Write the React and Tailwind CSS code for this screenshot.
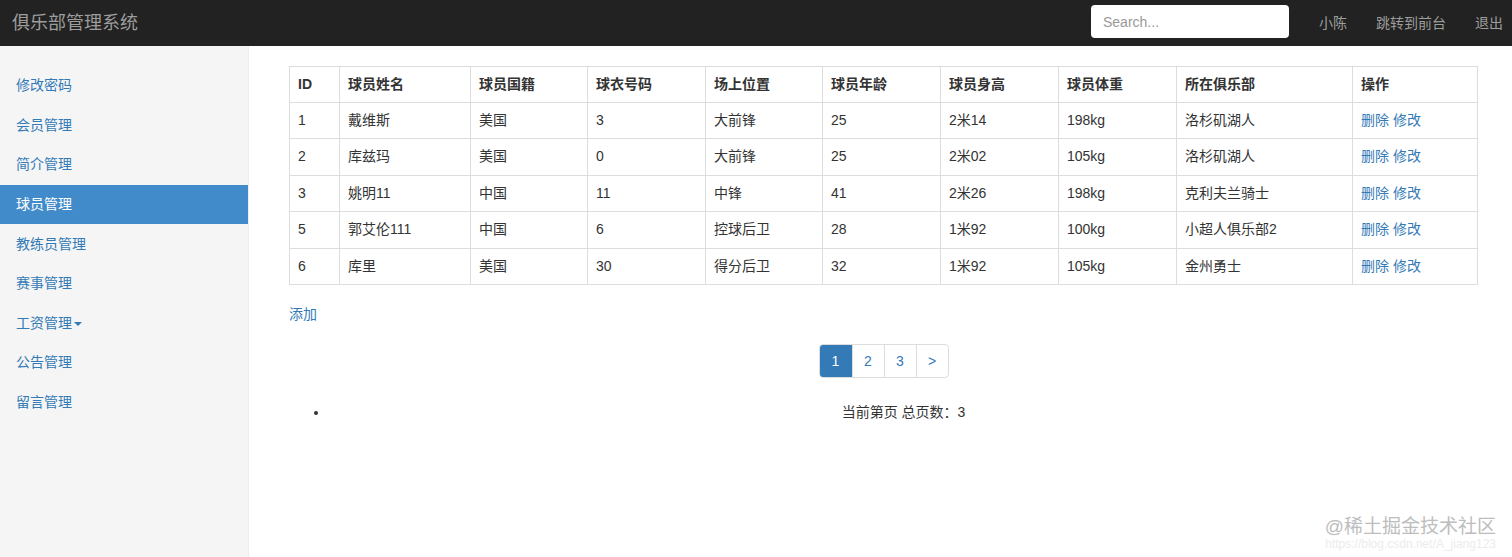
const font = {
  fontFamily: '"Liberation Sans", Arial, "Noto Sans CJK SC", sans-serif',
};

const menu = [
  "修改密码",
  "会员管理",
  "简介管理",
  "球员管理",
  "教练员管理",
  "赛事管理",
  "工资管理",
  "公告管理",
  "留言管理",
];

const headers = ["ID", "球员姓名", "球员国籍", "球衣号码", "场上位置", "球员年龄", "球员身高", "球员体重", "所在俱乐部", "操作"];
const widths = [50, 131, 117, 118, 117, 118, 118, 118, 176, 125];

const players = [
  ["1", "戴维斯", "美国", "3", "大前锋", "25", "2米14", "198kg", "洛杉矶湖人"],
  ["2", "库兹玛", "美国", "0", "大前锋", "25", "2米02", "105kg", "洛杉矶湖人"],
  ["3", "姚明11", "中国", "11", "中锋", "41", "2米26", "198kg", "克利夫兰骑士"],
  ["5", "郭艾伦111", "中国", "6", "控球后卫", "28", "1米92", "100kg", "小超人俱乐部2"],
  ["6", "库里", "美国", "30", "得分后卫", "32", "1米92", "105kg", "金州勇士"],
];

export default function App() {
  return (
    <div className="relative min-h-[557px] bg-white text-[14px] text-[#333]" style={font}>
      {/* top navbar */}
      <div className="flex h-[46px] items-center bg-[#222] pl-3">
        <div className="text-[18px] text-[#9d9d9d]">俱乐部管理系统</div>
        <div className="ml-auto flex items-center">
          <input
            className="mb-[3px] h-[33px] w-[198px] rounded-[4px] bg-white px-3 text-[14px] outline-none placeholder:text-[#999]"
            placeholder="Search..."
          />
          <div className="ml-[15px] flex text-[14px] text-[#9d9d9d]">
            <span className="px-[15px]">小陈</span>
            <span className="px-[14px]">跳转到前台</span>
            <span className="pl-[15px] pr-[9px]">退出</span>
          </div>
        </div>
      </div>

      <div className="flex">
        {/* sidebar */}
        <div className="min-h-[511px] w-[249px] shrink-0 border-r border-[#eee] bg-[#f5f5f5] pt-[20px]">
          {menu.map((m) => (
            <div
              key={m}
              className={
                m === "球员管理"
                  ? "flex h-[39.6px] items-center bg-[#428bca] px-4 text-white"
                  : "flex h-[39.6px] items-center px-4 text-[#337ab7]"
              }
            >
              {m}
              {m === "工资管理" && (
                <span className="ml-[2px] mt-[2px] inline-block h-0 w-0 border-x-[4px] border-t-[4px] border-x-transparent border-t-[#337ab7]" />
              )}
            </div>
          ))}
        </div>

        {/* main */}
        <div className="flex-1 pl-[40px] pr-[34px] pt-[20px]">
          <table className="w-[1188px] table-fixed border-collapse border border-[#ddd]">
            <colgroup>
              {widths.map((w, i) => (
                <col key={i} style={{ width: w }} />
              ))}
            </colgroup>
            <thead>
              <tr>
                {headers.map((h) => (
                  <th key={h} className="border border-[#ddd] px-2 py-2 text-left font-bold leading-[19px]">
                    {h}
                  </th>
                ))}
              </tr>
            </thead>
            <tbody>
              {players.map((p) => (
                <tr key={p[0]}>
                  {p.map((c, i) => (
                    <td key={i} className="border border-[#ddd] px-2 py-2 leading-[19.4px]">
                      {c}
                    </td>
                  ))}
                  <td className="border border-[#ddd] px-2 py-2 leading-[19.4px] text-[#337ab7]">删除 修改</td>
                </tr>
              ))}
            </tbody>
          </table>

          <div className="mt-[19px] leading-[20px] text-[#337ab7]">添加</div>

          <div className="mt-[20px] flex justify-center">
            <div className="flex overflow-hidden rounded-[4px] border border-[#ddd]">
              <span className="flex h-[32px] w-[32px] items-center justify-center bg-[#337ab7] text-white">1</span>
              <span className="flex h-[32px] w-[32px] items-center justify-center border-l border-[#ddd] text-[#337ab7]">2</span>
              <span className="flex h-[32px] w-[32px] items-center justify-center border-l border-[#ddd] text-[#337ab7]">3</span>
              <span className="flex h-[32px] w-[32px] items-center justify-center border-l border-[#ddd] text-[#337ab7]">&gt;</span>
            </div>
          </div>

          <ul className="mt-[24px] list-disc pl-10">
            <li className="text-center leading-[20px]">当前第页 总页数：3</li>
          </ul>
        </div>
      </div>

      {/* watermark */}
      <div className="pointer-events-none absolute bottom-[6px] right-[16px] flex flex-col items-end">
        <div className="text-[19px] leading-[22px] text-[#bdbdbd]">@稀土掘金技术社区</div>
        <div className="text-[12px] leading-[13px] text-[#ececec]">https://blog.csdn.net/A_jiang123</div>
      </div>
    </div>
  );
}
